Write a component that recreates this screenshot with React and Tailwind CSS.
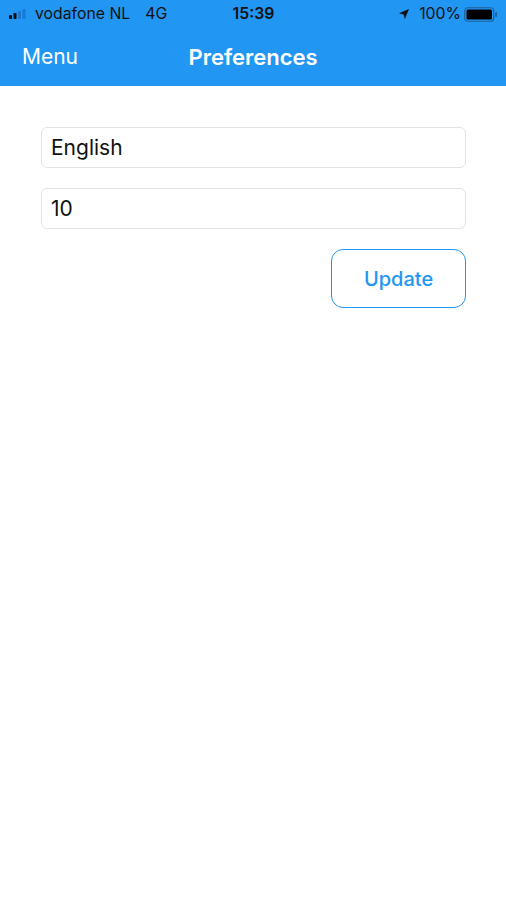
import React, { useState } from 'react';

const SignalBars = () => (
  <svg width="20" height="10" viewBox="0 0 20 10" className="mr-[6px]">
    <rect x="0" y="6" width="3" height="4" rx="0.6" fill="#111" />
    <rect x="4.5" y="4" width="3" height="6" rx="0.6" fill="#111" />
    <rect x="9" y="2" width="3" height="8" rx="0.6" fill="#1565c0" opacity="0.6" />
    <rect x="13.5" y="0" width="3" height="10" rx="0.6" fill="#1565c0" opacity="0.6" />
  </svg>
);

const Battery = () => (
  <svg width="34" height="15" viewBox="0 0 34 15">
    <rect x="0.75" y="0.75" width="29" height="13.5" rx="3" fill="none" stroke="#1e3a5f" strokeOpacity="0.6" strokeWidth="1.2" />
    <rect x="2.5" y="2.5" width="25.5" height="10" rx="1.5" fill="#000" />
    <rect x="31.2" y="5" width="1.8" height="5" rx="0.9" fill="#1e3a5f" fillOpacity="0.6" />
  </svg>
);

const LocationArrow = () => (
  <svg width="12" height="12" viewBox="0 0 12 12" className="mr-[9px]">
    <path d="M11 1 L1 5.2 L5.6 6.4 L6.8 11 Z" fill="#111" />
  </svg>
);

const App = () => {
  const [language, setLanguage] = useState('English');
  const [count, setCount] = useState('10');

  return (
    <div className="min-h-[900px] w-[506px] bg-white" style={{ fontFamily: 'Inter, "Liberation Sans", sans-serif' }}>
      {/* status bar + nav */}
      <div className="bg-[#2196f3]">
        <div className="flex h-[28px] items-center justify-between pl-[9px] pr-[8px] text-[15.8px] text-[#111]">
          <div className="flex w-[190px] items-center">
            <SignalBars />
            <span>vodafone NL</span>
            <span className="ml-[15px]">4G</span>
          </div>
          <div className="font-semibold">15:39</div>
          <div className="flex w-[190px] items-center justify-end">
            <LocationArrow />
            <span className="mr-[3px]">100%</span>
            <Battery />
          </div>
        </div>
        <div className="relative flex h-[58px] items-center px-[22px] text-white">
          <span className="text-[21px]">Menu</span>
          <span className="absolute left-1/2 -translate-x-1/2 text-[22px] font-semibold">Preferences</span>
        </div>
      </div>

      {/* form */}
      <div className="flex flex-col pl-[41px] pr-[40px] pt-[41px]">
        <input
          value={language}
          onChange={(e) => setLanguage(e.target.value)}
          className="h-[41px] w-full rounded-[6px] border border-[#e3e3e3] px-[9px] text-[21px] text-[#111] outline-none"
        />
        <input
          value={count}
          onChange={(e) => setCount(e.target.value)}
          className="mt-[20px] h-[41px] w-full rounded-[6px] border border-[#e3e3e3] px-[9px] text-[21px] text-[#111] outline-none"
        />
        <div className="mt-[20px] flex justify-end">
          <button className="h-[59px] w-[135px] rounded-[12px] border border-[#2196f3] text-[20px] font-medium text-[#2196f3]">
            Update
          </button>
        </div>
      </div>
    </div>
  );
};

export default App;
